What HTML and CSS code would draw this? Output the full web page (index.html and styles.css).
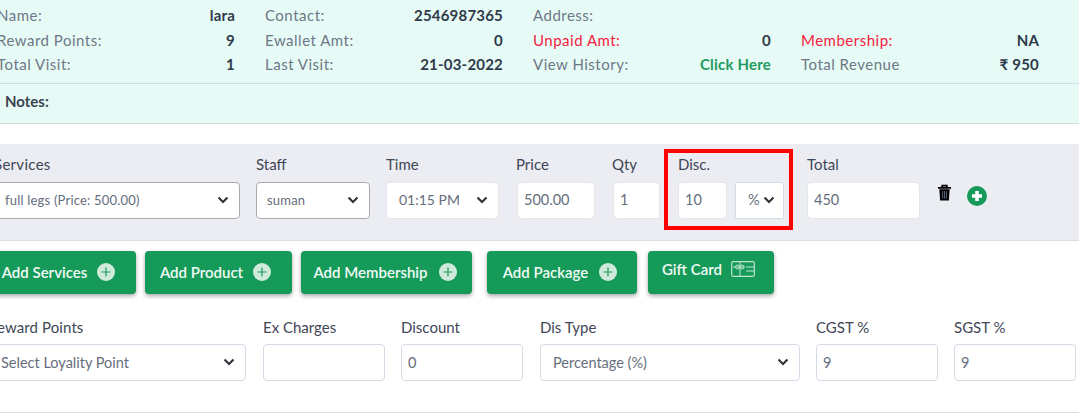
FILE: index.html
```html
<!DOCTYPE html>
<html lang="en">
<head>
<meta charset="utf-8">
<title>Appointment</title>
<link rel="stylesheet" href="styles.css">
</head>
<body>
<section class="summary">
  <div class="info">
    <div class="pair"><span>Name:</span><b>lara</b></div>
    <div class="pair"><span>Contact:</span><b>2546987365</b></div>
    <div class="pair"><span>Address:</span><b></b></div>
    <div class="pair"></div>
    <div class="pair"><span>Reward Points:</span><b>9</b></div>
    <div class="pair"><span>Ewallet Amt:</span><b>0</b></div>
    <div class="pair"><span class="red">Unpaid Amt:</span><b>0</b></div>
    <div class="pair"><span class="red">Membership:</span><b>NA</b></div>
    <div class="pair"><span>Total Visit:</span><b>1</b></div>
    <div class="pair"><span>Last Visit:</span><b>21-03-2022</b></div>
    <div class="pair"><span>View History:</span><b class="link">Click Here</b></div>
    <div class="pair"><span>Total Revenue</span><b>₹ 950</b></div>
  </div>
  <div class="notes">Notes:</div>
</section>

<section class="service-row">
  <div class="field w-services"><label>Services</label>
    <div class="control dark small inset-services"><span>full legs (Price: 500.00)</span><svg class="chev" viewBox="0 0 12 8"><path d="M1.5 1.5 6 6l4.5-4.5"/></svg></div></div>
  <div class="field w-staff"><label>Staff</label>
    <div class="control dark small"><span>suman</span><svg class="chev" viewBox="0 0 12 8"><path d="M1.5 1.5 6 6l4.5-4.5"/></svg></div></div>
  <div class="field w-time"><label>Time</label>
    <div class="control pad-time"><span>01:15 PM</span><svg class="chev" viewBox="0 0 12 8"><path d="M1.5 1.5 6 6l4.5-4.5"/></svg></div></div>
  <div class="field w-price"><label>Price</label><div class="control"><span>500.00</span></div></div>
  <div class="field w-qty"><label>Qty</label><div class="control"><span>1</span></div></div>
  <div class="field w-disc"><label>Disc.</label>
    <div class="disc-controls">
      <div class="control disc-val"><span>10</span></div>
      <div class="control disc-type"><span>%</span><svg class="chev" viewBox="0 0 12 8"><path d="M1.5 1.5 6 6l4.5-4.5"/></svg></div>
    </div>
    <div class="highlight"></div>
  </div>
  <div class="field w-total"><label>Total</label><div class="control"><span>450</span></div></div>
  <div class="row-actions">
    <svg class="trash" viewBox="0 0 16 18"><path d="M5.5 3V1.2h5V3M1 3.5h14" fill="none" stroke="#000" stroke-width="1.8"/><path d="M2.5 5h11l-.8 12H3.300z" fill="#000"/><path d="M6 7v8M8 7v8M10 7v8" stroke="#5b6b86" stroke-width="1"/></svg>
    <svg class="plus-green" viewBox="0 0 20 20"><circle cx="10" cy="10" r="10" fill="#169a5a"/><path d="M10 5v10M5 10h10" stroke="#fff" stroke-width="3.600"/></svg>
  </div>
</section>

<section class="buttons">
  <button class="btn b1">Add Services<svg class="plus" viewBox="0 0 18 18"><circle cx="9" cy="9" r="9" fill="#cfeadb"/><path d="M9 4.500v9M4.500 9h9" stroke="#169a5a" stroke-width="1.200"/></svg></button>
  <button class="btn b2">Add Product<svg class="plus" viewBox="0 0 18 18"><circle cx="9" cy="9" r="9" fill="#cfeadb"/><path d="M9 4.500v9M4.500 9h9" stroke="#169a5a" stroke-width="1.200"/></svg></button>
  <button class="btn b3">Add Membership<svg class="plus" viewBox="0 0 18 18"><circle cx="9" cy="9" r="9" fill="#cfeadb"/><path d="M9 4.500v9M4.500 9h9" stroke="#169a5a" stroke-width="1.200"/></svg></button>
  <button class="btn b4">Add Package<svg class="plus" viewBox="0 0 18 18"><circle cx="9" cy="9" r="9" fill="#cfeadb"/><path d="M9 4.500v9M4.500 9h9" stroke="#169a5a" stroke-width="1.200"/></svg></button>
  <button class="btn b5 gift"><span class="gift-text">Gift Card</span><svg class="card" viewBox="0 0 24 16"><rect x=".7" y=".7" width="22.600" height="14.600" rx="1.500" fill="none" stroke="#bfe5d0" stroke-width="1.200"/><path d="M15 6h8M15 10h8M9 1v14M2 6h12" stroke="#bfe5d0" stroke-width="1"/><circle cx="6.500" cy="6" r="2" fill="none" stroke="#bfe5d0"/><circle cx="11" cy="6" r="2" fill="none" stroke="#bfe5d0"/></svg></button>
</section>

<section class="totals">
  <div class="field w-reward"><label>Reward Points</label>
    <div class="control light pad-reward"><span>Select Loyality Point</span><svg class="chev" viewBox="0 0 12 8"><path d="M1.5 1.5 6 6l4.5-4.5"/></svg></div></div>
  <div class="field w-122"><label>Ex Charges</label><div class="control light"></div></div>
  <div class="field w-122 gap-17"><label>Discount</label><div class="control light"><span>0</span></div></div>
  <div class="field w-distype"><label>Dis Type</label>
    <div class="control light"><span>Percentage (%)</span><svg class="chev" viewBox="0 0 12 8"><path d="M1.5 1.5 6 6l4.5-4.5"/></svg></div></div>
  <div class="field w-122"><label>CGST %</label><div class="control light"><span>9</span></div></div>
  <div class="field w-122"><label>SGST %</label><div class="control light"><span>9</span></div></div>
</section>
</body>
</html>
```
FILE: styles.css
```css
* { box-sizing: border-box; }
html, body { margin: 0; padding: 0; }
body {
  width: 1079px;
  height: 413px;
  overflow: hidden;
  background: #fff;
  font-family: "Lato", "Noto Sans", sans-serif;
  font-size: 15px;
  color: #3a4252;
}
.summary {
  height: 124px;
  background: #e6fbf6;
  border-bottom: 1px solid #d5d9dc;
}
.info {
  display: grid;
  grid-template-columns: repeat(4, 238px);
  column-gap: 30px;
  grid-auto-rows: 24.500px;
  height: 84px;
  padding-top: 3px;
  margin-left: -5px;
  width: 1084px;
  padding-left: 2px;
  border-bottom: 1px solid #d6dbe8;
}
.pair {
  display: flex;
  justify-content: space-between;
  align-items: center;
  color: #6f7786;
  letter-spacing: .5px;
}
.pair b { color: #2f3a4a; font-weight: 700; letter-spacing: .2px; }
.pair .red { color: #f5203f; }
.pair .link { color: #239a5e; }
.notes {
  padding: 8px 0 0 5px;
  font-weight: 700;
  color: #3b4350;
}
.service-row {
  margin-top: 20px;
  height: 97px;
  background: #ebedf2;
  border-bottom: 1px solid #dcdde0;
  display: flex;
  padding-top: 11px;
  margin-left: 0;
}
.field { display: flex; flex-direction: column; position: relative; margin-right: 16px; flex: none; }
.field label { height: 27px; line-height: 19px; color: #3f4656; display: block; white-space: nowrap; }
.control {
  height: 37px;
  background: #fff;
  border: 1px solid #e4e6ea;
  border-radius: 4px;
  display: flex;
  align-items: center;
  justify-content: space-between;
  padding: 0 10px 2px 6px;
  color: #666e7c;
  font-size: 14.500px;
  white-space: nowrap;
}
.control.dark { border: 1px solid #a9abae; }
.control.small { font-size: 13px; padding-left: 10px; letter-spacing: .2px; }
.control.light { border: 1px solid #d5dbe6; height: 37px; padding-bottom: 1px; }
.chev { width: 12px; height: 8px; flex: none; }
.chev path { fill: none; stroke: #32363c; stroke-width: 2.200; }
.w-services { width: 246px; margin-left: -6px; margin-right: 16px; }
.w-services label { letter-spacing: .3px; }
.inset-services { padding-left: 10px; }
.w-staff { width: 114px; }
.w-time { width: 113px; margin-right: 18px; }
.pad-time { padding-left: 12px; font-size: 14px; }
.w-price { width: 78px; margin-right: 18px; }
.w-price label, .w-qty label { margin-left: -1px; }
.w-qty { width: 47px; margin-right: 18px; }
.w-disc { width: 107px; margin-right: 22px; }
.disc-controls { display: flex; gap: 8px; }
.disc-val { width: 49px; }
.disc-type { width: 49px; padding: 0 8px 2px 12px; border-radius: 2px; border-color: #d5dbe6; }
.highlight {
  position: absolute;
  left: -14px;
  top: -6px;
  width: 129px;
  height: 81px;
  border: 4px solid #f00;
  pointer-events: none;
}
.w-total { width: 113px; margin-right: 17px; }
.row-actions { display: flex; gap: 15px; padding-top: 29px; align-items: flex-start; }
.trash { width: 15px; height: 18px; }
.plus-green { width: 20px; height: 20px; margin-top: 2px; }
.buttons { display: flex; margin-top: 10px; height: 43px; }
.btn {
  height: 43px;
  border: 0;
  border-radius: 4px;
  background: #169a5a;
  color: #f1faf5;
  font: 600 15px "Lato", sans-serif;
  display: flex;
  align-items: center;
  justify-content: center;
  gap: 10px;
  box-shadow: 0 2px 4px rgba(0,0,0,.35);
  padding: 0 0 2px;
  flex: none;
}
.plus { width: 18px; height: 18px; }
.b1 { width: 141px; margin-left: -5px; margin-right: 9px; padding-right: 14px; }
.b2 { width: 147px; margin-right: 9px; padding-right: 6px; }
.b3 { width: 171px; margin-right: 15px; padding-right: 3px; gap: 11px; }
.b4 { width: 150px; margin-right: 11px; padding-right: 4px; gap: 11px; }
.b5 { width: 126px; }
.gift { gap: 9px; align-items: flex-start; padding: 9px 5px 0 0; }
.gift-text { line-height: 18px; }
.card { width: 24px; height: 16px; margin-top: 1px; }
.totals { display: flex; margin-top: 24px; height: 95px; border-bottom: 1px solid #dcdee2; align-items: flex-start; }
.totals label { height: 26px; }
.w-reward { width: 252px; margin-left: -6px; margin-right: 17px; }
.w-reward label { margin-left: -6px; letter-spacing: .1px; }
.pad-reward { padding-left: 6px; }
.w-122 { width: 122px; }
.gap-17 { margin-right: 17px; }
.w-distype { width: 260px; }
.w-distype .control { padding-left: 12px; }
```
